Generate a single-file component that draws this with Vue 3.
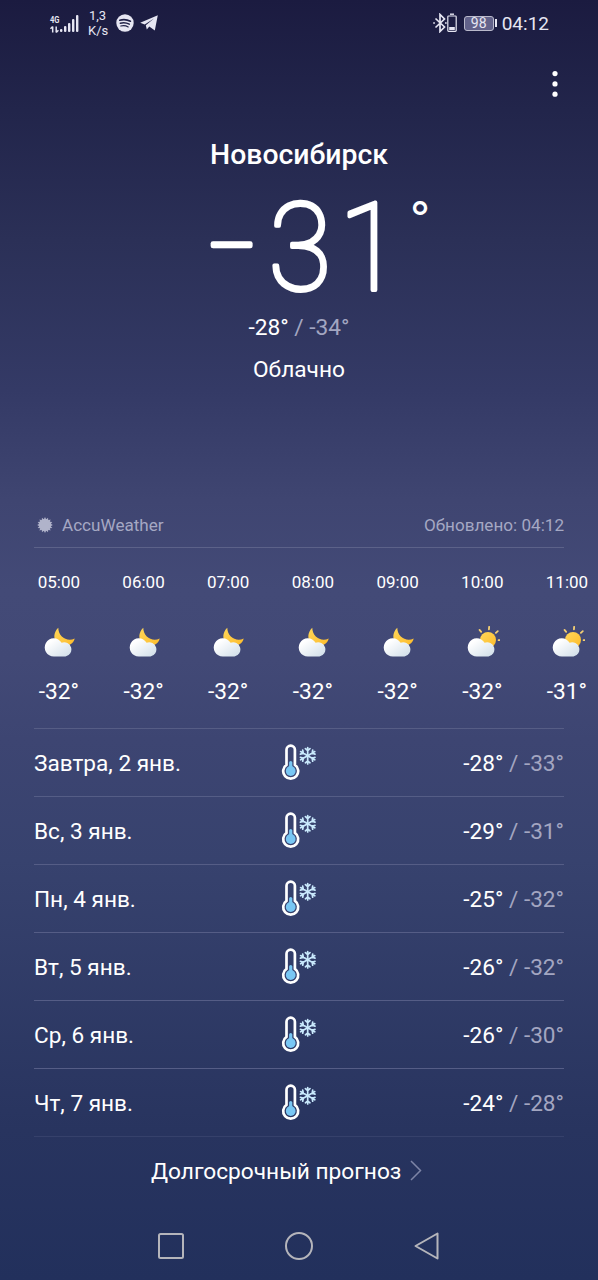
<script setup>
const hours = [
  { time: '05:00', icon: 'moon', temp: -32 },
  { time: '06:00', icon: 'moon', temp: -32 },
  { time: '07:00', icon: 'moon', temp: -32 },
  { time: '08:00', icon: 'moon', temp: -32 },
  { time: '09:00', icon: 'moon', temp: -32 },
  { time: '10:00', icon: 'sun', temp: -32 },
  { time: '11:00', icon: 'sun', temp: -31 },
]

const days = [
  { name: 'Завтра, 2 янв.', high: -28, low: -33 },
  { name: 'Вс, 3 янв.', high: -29, low: -31 },
  { name: 'Пн, 4 янв.', high: -25, low: -32 },
  { name: 'Вт, 5 янв.', high: -26, low: -32 },
  { name: 'Ср, 6 янв.', high: -26, low: -30 },
  { name: 'Чт, 7 янв.', high: -24, low: -28 },
]

const rays = [-40, 5, 48, 91]
const arms = [0, 60, 120, 180, 240, 300]
const teeth = Array.from({ length: 16 }, (_, i) => i * 22.5)
</script>

<template>
  <div class="screen">
    <!-- shared gradients -->
    <svg class="defs" width="0" height="0">
      <defs>
        <linearGradient id="cloud" x1="0" y1="0" x2="1" y2="1">
          <stop offset="0.2" stop-color="#ffffff" />
          <stop offset="1" stop-color="#cfdde8" />
        </linearGradient>
        <linearGradient id="gold" x1="0" y1="0" x2="1" y2="1">
          <stop offset="0" stop-color="#ffd75a" />
          <stop offset="1" stop-color="#fdbb2a" />
        </linearGradient>
      </defs>
    </svg>

    <header class="status">
      <div class="status-left">
        <div class="network">
          <svg class="gen" width="10" height="21" viewBox="0 0 10 21">
            <text x="0" y="10" textLength="9.500" lengthAdjust="spacingAndGlyphs">4G</text>
            <path d="M2.700 19.500v-6M.5 15.700l2.200-2.200M6.200 13.500v6M8.400 17.300L6.200 19.500" fill="none" stroke="#e6e6f2" stroke-width="1.500" />
          </svg>
          <svg class="bars" width="19" height="17" viewBox="0 0 19 17" fill="#e6e6f2">
            <rect x="0" y="14" width="2.400" height="3" rx="1" />
            <rect x="4" y="11" width="2.400" height="6" rx="1" />
            <rect x="8" y="8" width="2.400" height="9" rx="1" />
            <rect x="12" y="4" width="2.400" height="13" rx="1" />
            <rect x="16" y="0" width="2.400" height="17" rx="1" />
          </svg>
        </div>
        <div class="speed">1,3<br>K/s</div>
        <svg class="spotify" width="18" height="18" viewBox="0 0 18 18">
          <circle cx="9" cy="9" r="8.700" fill="#e6e6f2" />
          <g fill="none" stroke="#1f2046" stroke-linecap="round">
            <path d="M3.800 6.200c3.400-1 7.300-.7 10.600 1" stroke-width="1.700" />
            <path d="M4.300 9.200c3-.8 6.200-.5 9 1" stroke-width="1.400" />
            <path d="M4.800 12c2.500-.6 5.100-.4 7.400.9" stroke-width="1.200" />
          </g>
        </svg>
        <svg class="telegram" width="18" height="16" viewBox="0 0 18 16">
          <path d="M.2 7.700L17.800.2 14.800 15.400 9.300 11.500 6.800 14.600 5.800 10.200 14 3.600 4.700 9.400z" fill="#e6e6f2" />
        </svg>
      </div>
      <div class="status-right">
        <svg width="24" height="20" viewBox="0 0 24 20" fill="none" stroke="#e6e6f2">
          <path d="M2.500 5.500l9 8.500-4.500 4.500v-17L11.500 6l-9 8.500" stroke-width="1.700" />
          <path d="M.2 10h1.700M12 10h1.700" stroke-width="1.700" />
          <rect x="14.800" y="3" width="8.400" height="15.300" rx=".8" stroke-width="1.200" />
          <path d="M17 1.200h4" stroke-width="1.400" />
          <path d="M16.200 15.500h5.600" stroke-width="3" />
        </svg>
        <div class="battery"><span>98</span></div>
        <div class="nub"></div>
        <span class="clock">04:12</span>
      </div>
    </header>

    <div class="toolbar">
      <svg width="8" height="28" viewBox="0 0 8 28" fill="#fff">
        <circle cx="4" cy="3.600" r="2.600" />
        <circle cx="4" cy="13.900" r="2.600" />
        <circle cx="4" cy="24.200" r="2.600" />
      </svg>
    </div>

    <section class="current">
      <h1>Новосибирск</h1>
      <svg class="big-temp" width="240" height="122" viewBox="0 0 240 122">
        <text class="minus" x="27" y="86">−</text>
        <text class="digits" x="89.500" y="97.500" textLength="63" lengthAdjust="spacingAndGlyphs">3</text>
        <text class="digits" x="160" y="97.500" textLength="62" lengthAdjust="spacingAndGlyphs">1</text>
        <text class="degree" x="231.300" y="40">°</text>
      </svg>
      <div class="range">-28° <span>/ -34°</span></div>
      <div class="condition">Облачно</div>
    </section>

    <section class="source">
      <svg width="16" height="16" viewBox="-8 -8 16 16" fill="#b0b3ca">
        <circle r="6.200" />
        <path v-for="a in teeth" :key="a" :transform="`rotate(${a})`" d="M-1.200-5.500L0-7.900 1.200-5.500z" />
      </svg>
      <span class="provider">AccuWeather</span>
      <span class="updated">Обновлено: 04:12</span>
    </section>

    <section class="hourly">
      <div v-for="h in hours" :key="h.time" class="hour">
        <div class="time">{{ h.time }}</div>
        <svg width="36" height="32" viewBox="0 0 36 32">
          <path v-if="h.icon === 'moon'" d="M17.300 1.800C13 5.500 11.500 13 16.500 17.500c6 4.500 15.500 2.500 17.200-5C29 15 24 13.500 20.800 10.500 18.300 8 17.300 5 17.300 1.800z" fill="url(#gold)" />
          <g v-else>
            <circle cx="24" cy="14" r="8" fill="url(#gold)" />
            <path v-for="r in rays" :key="r" :transform="`translate(24 14) rotate(${r})`" d="M0-13.200v2.600" stroke="#f3cf74" stroke-width="1.800" stroke-linecap="round" />
          </g>
          <path d="M12.800 30.500a9.100 9.100 0 1 1 7.800-13.800A7.200 7.200 0 1 1 24.500 30.500z" fill="url(#cloud)" />
        </svg>
        <div class="temp">{{ h.temp }}°</div>
      </div>
    </section>

    <section class="daily">
      <div v-for="d in days" :key="d.name" class="day">
        <span class="name">{{ d.name }}</span>
        <svg width="38" height="40" viewBox="0 0 38 40" fill="none">
          <path d="M6.500 21.900V6.800a4.200 4.200 0 0 1 8.400 0v15.100a7.500 7.500 0 1 1-8.400 0z" stroke="#fff" stroke-width="2.700" />
          <circle cx="10.700" cy="28" r="4.900" fill="#79c7f4" />
          <path d="M10.700 27V19.500" stroke="#79c7f4" stroke-width="3.200" stroke-linecap="round" />
          <g stroke="#c9e9fc" stroke-width="1.700" stroke-linecap="round">
            <path v-for="a in arms" :key="a" :transform="`translate(27.700 12.700) rotate(${a})`" d="M0 0V-8.200M-2.300-7.100L0-5.100 2.300-7.100" />
          </g>
        </svg>
        <span class="range">{{ d.high }}° <span>/ {{ d.low }}°</span></span>
      </div>
    </section>

    <div class="more">
      <span>Долгосрочный прогноз</span>
      <svg width="14" height="22" viewBox="0 0 14 22">
        <path d="M2 1l9.500 9.500L2 20" fill="none" stroke="#7d84a6" stroke-width="1.500" />
      </svg>
    </div>

    <nav class="navbar">
      <svg width="28" height="28" viewBox="0 0 28 28"><rect x="2" y="2" width="24" height="24" rx="1.500" /></svg>
      <svg width="28" height="28" viewBox="0 0 28 28"><circle cx="14" cy="14" r="13" /></svg>
      <svg width="28" height="28" viewBox="0 0 28 28"><path d="M24.500 1.500v25L2.500 14z" /></svg>
    </nav>
  </div>
</template>

<style>
body {
  margin: 0;
  background: #22305e;
}
</style>

<style scoped>
.screen {
  width: 598px;
  height: 1280px;
  overflow: hidden;
  display: flex;
  flex-direction: column;
  color: #fff;
  font-family: Roboto, sans-serif;
  background: linear-gradient(#1b1b40 0, #22254b 110px, #2b3057 240px, #343a66 390px, #3f4571 500px, #434a77 590px, #424976 660px, #3d4572 740px, #37426e 860px, #28345f 1130px, #22305c 1280px);
}

.defs {
  position: absolute;
}

.status {
  height: 46px;
  flex: none;
  display: flex;
  justify-content: space-between;
  align-items: center;
  padding: 0 49px 0 50px;
  color: #e6e6f2;
}

.status-left,
.status-right {
  display: flex;
  align-items: center;
}

.network {
  display: flex;
  align-items: flex-end;
}

.gen {
  font-size: 9.5px;
  font-weight: 700;
  fill: #e6e6f2;
  overflow: visible;
}

.bars {
  margin-bottom: 2px;
}

.speed {
  width: 19px;
  margin-left: 9px;
  font-size: 13px;
  line-height: 15px;
  text-align: center;
}

.spotify {
  margin-left: 9px;
}

.telegram {
  margin-left: 6px;
}

.battery {
  width: 28px;
  height: 13px;
  margin-left: 7px;
  border: 1px solid #b9b9cb;
  border-radius: 3px;
  background: #62628a;
  font-size: 14px;
  line-height: 13px;
  text-align: center;
}

.nub {
  width: 2px;
  height: 8px;
  margin-left: 1px;
  background: #e6e6f2;
}

.clock {
  margin-left: 5px;
  font-size: 19px;
}

.toolbar {
  height: 76px;
  flex: none;
  display: flex;
  justify-content: flex-end;
  align-items: center;
  padding-right: 39px;
}

.current {
  height: 382px;
  flex: none;
  display: flex;
  flex-direction: column;
  align-items: center;
}

h1 {
  margin: 16px 0 0;
  font-size: 28.4px;
  font-weight: 500;
  line-height: 34px;
}

.big-temp {
  margin-top: 20px;
  overflow: visible;
}

.digits,
.minus {
  font-size: 123px;
  font-weight: 100;
  fill: #fff;
  stroke: #fff;
  stroke-width: 4px;
  stroke-linejoin: round;
}

.minus {
  font-size: 91px;
  stroke-width: 4.8px;
}

.degree {
  font-family: Inter, sans-serif;
  font-size: 43px;
  font-weight: 400;
  fill: #fff;
}

.range {
  font-size: 22.7px;
  line-height: 28px;
  white-space: nowrap;
}

.range span {
  color: #a3a6c1;
}

.condition {
  margin-top: 14px;
  font-size: 22.7px;
  line-height: 28px;
}

.source {
  height: 44px;
  flex: none;
  display: flex;
  align-items: center;
  box-sizing: border-box;
  margin: 0 34px 1px;
  padding: 0 0 2px 3px;
  border-bottom: 1px solid #5c6289;
  font-size: 17.1px;
  color: #a5a8c3;
}

.provider {
  margin-left: 9px;
}

.updated {
  margin-left: auto;
}

.hourly {
  height: 179px;
  flex: none;
  display: flex;
  margin-left: 16.5px;
}

.hour {
  flex: none;
  width: 84.7px;
  display: flex;
  flex-direction: column;
  align-items: center;
}

.time {
  margin: 23px 0 34px;
  font-size: 17px;
  line-height: 20px;
}

.temp {
  margin-top: 20px;
  font-size: 22.7px;
  line-height: 28px;
}

.daily {
  margin: 0 34px;
  border-top: 1px solid #565d85;
}

.day {
  height: 67px;
  display: grid;
  grid-template-columns: 1fr 38px 1fr;
  align-items: center;
  border-bottom: 1px solid #555d86;
  font-size: 22.6px;
}

.day:last-child {
  border-color: #36416b;
}

.day .name,
.day .range {
  padding-top: 2px;
}

.day .range {
  font-size: 22.6px;
  text-align: right;
}

.more {
  height: 68px;
  flex: none;
  display: flex;
  align-items: center;
  padding-left: 151px;
  gap: 8px;
  font-size: 22.7px;
}

.navbar {
  display: flex;
  gap: 100px;
  margin: 27px 0 0 157px;
  fill: none;
  stroke: #b5b5bb;
  stroke-width: 2;
  stroke-linejoin: round;
}
</style>
